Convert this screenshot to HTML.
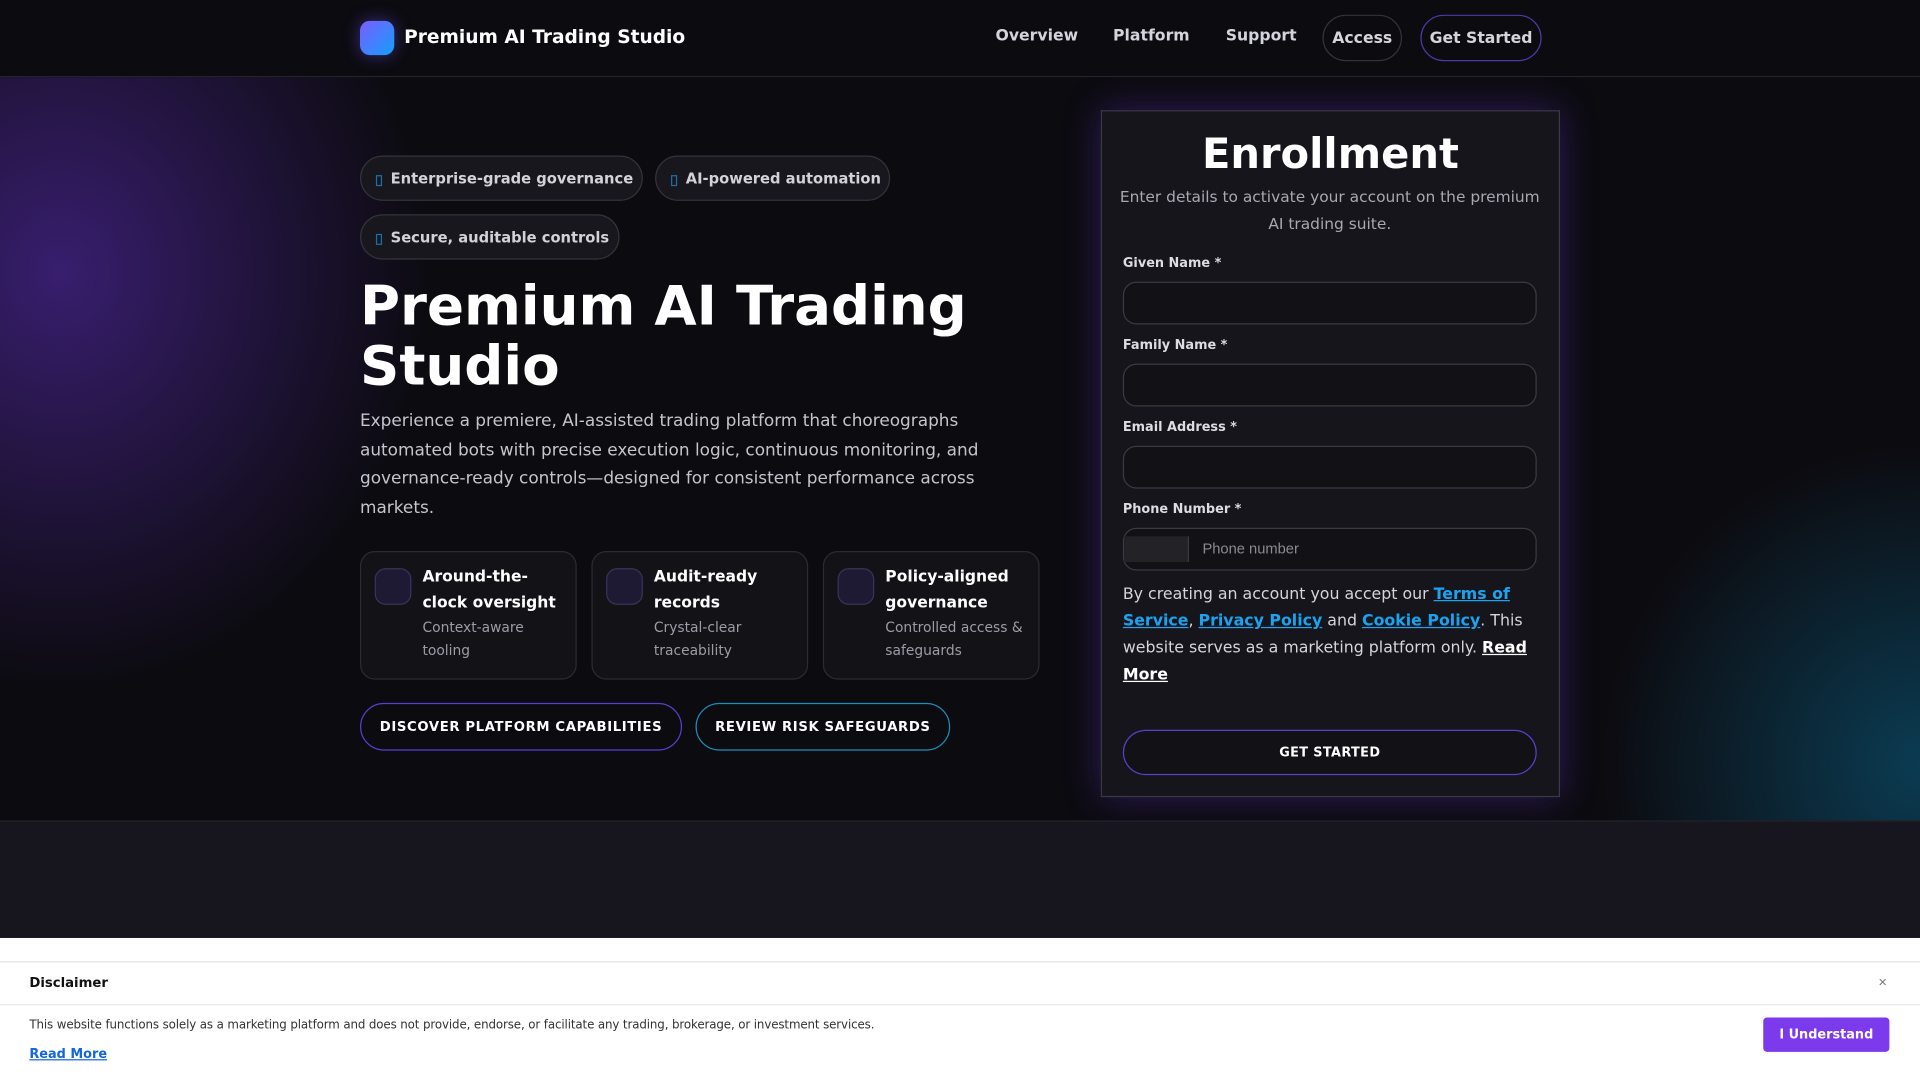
<!DOCTYPE html>
<html><head><meta charset="utf-8"><style>
html,body{margin:0;padding:0;width:1920px;height:1080px;overflow:hidden;background:#0c0b10;}
#w{position:absolute;left:0;top:0;width:1568px;height:882px;transform:scale(1.22449);transform-origin:0 0;font-family:"DejaVu Sans","Liberation Sans",sans-serif;color:#e8e8ee;overflow:hidden;background:#0c0b10}
.a{position:absolute;white-space:nowrap}
header{position:absolute;left:0;top:0;width:1568px;height:62px;background:#0c0b10;border-bottom:1px solid #24232b;z-index:2}
.logo{left:294px;top:17px;width:28px;height:28px;border-radius:8px;background:linear-gradient(135deg,#7b5cff,#139fff);box-shadow:0 0 14px rgba(110,90,255,.45)}
.nav{font-size:12.8px;font-weight:bold;color:#d4d4dc;top:22px}
.pill{border:1px solid #34333d;border-radius:20px;height:38px;top:12px;box-sizing:border-box;font-size:12.8px;font-weight:bold;color:#d4d4dc;display:flex;align-items:center;justify-content:center}
.hero{left:0;top:63px;width:1568px;height:607px;background:
radial-gradient(ellipse 300px 340px at 50px 160px,rgba(75,38,150,.7),transparent 100%),
radial-gradient(ellipse 260px 260px at 1568px 560px,rgba(10,80,110,.7),transparent 100%),#0c0b10}
.chip{height:37px;border:1px solid #34333c;border-radius:19px;background:#18171d;box-sizing:border-box;font-size:12px;font-weight:bold;color:#d2d2da;display:flex;align-items:center;padding-left:24px}
.chip:before{content:"";position:absolute;left:12px;top:15px;width:3px;height:7px;border:1px solid #1f6ea8}
h1{position:absolute;left:294px;top:226px;margin:0;font-size:44.6px;line-height:49px;font-weight:bold;color:#fff;white-space:nowrap}
.p{left:294px;top:333px;width:520px;font-size:13.8px;line-height:23.5px;color:#c4c4cc;white-space:normal}
.card{top:450px;width:177px;height:105px;border:1px solid #2c2b33;border-radius:12px;background:#131217;box-sizing:border-box;white-space:normal}
.card .ic{position:absolute;left:11px;top:13px;width:30px;height:30px;border-radius:9px;background:#1e1a33;border:1px solid #3b3358;box-sizing:border-box}
.card .t{position:absolute;left:50px;top:10px;font-size:12.7px;font-weight:bold;line-height:20.5px;color:#fff;width:122px}
.card .s{position:absolute;left:50px;top:53px;font-size:11.3px;line-height:18.5px;color:#9c9ca6;width:122px}
.btn{top:574px;height:39px;border-radius:20px;box-sizing:border-box;font-size:10.8px;font-weight:bold;letter-spacing:.5px;color:#fff;display:flex;align-items:center;justify-content:center}
.form{left:899px;top:90px;width:375px;height:561px;background:#16151b;border:1px solid #3a3848;box-sizing:border-box;box-shadow:0 0 28px rgba(110,60,230,.35)}
.lbl{left:917px;font-size:10.5px;font-weight:bold;color:#dcdce2}
.in{left:917px;width:338px;height:35px;border:1px solid #3a3a42;border-radius:11px;background:#121116;box-sizing:border-box}
.terms{left:917px;top:475px;width:340px;font-size:12.9px;line-height:22px;color:#d4d4da;white-space:normal}
.terms a{color:#1aa3f0;font-weight:bold;text-decoration:underline}
.terms b{text-decoration:underline;color:#fff}
.sec{left:0;top:670px;width:1568px;height:96px;background:#17161e;border-top:1px solid #24232b}
.disc{left:0;top:766px;width:1568px;height:116px;background:#fff}
</style></head><body><div id="w">
<header>
<div class="a logo"></div>
<div class="a" style="left:330px;top:21px;font-size:15.2px;font-weight:bold;color:#fff">Premium AI Trading Studio</div>
<div class="a nav" style="left:813px">Overview</div>
<div class="a nav" style="left:909px">Platform</div>
<div class="a nav" style="left:1001px">Support</div>
<div class="a pill" style="left:1080px;width:65px">Access</div>
<div class="a pill" style="left:1160px;width:99px;border-color:#4b3aa8">Get Started</div>
</header>
<div class="a hero"></div>
<div class="a chip" style="left:294px;top:127px;width:231px">Enterprise-grade governance</div>
<div class="a chip" style="left:535px;top:127px;width:192px">AI-powered automation</div>
<div class="a chip" style="left:294px;top:175px;width:212px">Secure, auditable controls</div>
<h1>Premium AI Trading<br>Studio</h1>
<div class="a p">Experience a premiere, AI-assisted trading platform that choreographs automated bots with precise execution logic, continuous monitoring, and governance-ready controls—designed for consistent performance across markets.</div>
<div class="a card" style="left:294px"><div class="ic"></div><div class="t">Around-the-clock oversight</div><div class="s">Context-aware tooling</div></div>
<div class="a card" style="left:483px"><div class="ic"></div><div class="t">Audit-ready records</div><div class="s">Crystal-clear traceability</div></div>
<div class="a card" style="left:672px"><div class="ic"></div><div class="t">Policy-aligned governance</div><div class="s">Controlled access &amp; safeguards</div></div>
<div class="a btn" style="left:294px;width:263px;border:1px solid #5a3fd0">DISCOVER PLATFORM CAPABILITIES</div>
<div class="a btn" style="left:568px;width:208px;border:1px solid #1a8fb8">REVIEW RISK SAFEGUARDS</div>
<div class="a form"></div>
<div class="a" style="left:899px;width:375px;top:106px;text-align:center;font-size:34px;font-weight:bold;color:#fff">Enrollment</div>
<div class="a" style="left:908px;width:356px;top:150px;text-align:center;font-size:12.6px;line-height:21.5px;color:#a8a8b2;white-space:normal">Enter details to activate your account on the premium AI trading suite.</div>
<div class="a lbl" style="top:209px">Given Name *</div>
<div class="a in" style="top:230px"></div>
<div class="a lbl" style="top:276px">Family Name *</div>
<div class="a in" style="top:297px"></div>
<div class="a lbl" style="top:343px">Email Address *</div>
<div class="a in" style="top:364px"></div>
<div class="a lbl" style="top:410px">Phone Number *</div>
<div class="a in" style="top:431px"></div>
<div class="a" style="left:918px;top:438px;width:52px;height:21px;background:#232227;border-right:1px solid #3a3a42"></div>
<div class="a" style="left:982px;top:441px;font-size:12px;color:#8a8a92;font-family:'Liberation Sans',sans-serif">Phone number</div>
<div class="a terms">By creating an account you accept our <a>Terms of Service</a>, <a>Privacy Policy</a> and <a>Cookie Policy</a>. This website serves as a marketing platform only. <b>Read More</b></div>
<div class="a btn" style="left:917px;top:596px;width:338px;height:37px;border:1px solid #5a3fd0;font-size:10.5px;letter-spacing:.3px;background:#121116">GET STARTED</div>
<div class="a sec"></div>
<div class="a disc"></div>
<div class="a" style="left:0;top:785px;width:1568px;height:0;border-top:1px solid #e4e4e8"></div>
<div class="a" style="left:0;top:820px;width:1568px;height:0;border-top:1px solid #e8e8ec"></div>
<div class="a" style="left:24px;top:796px;font-size:10.8px;font-weight:bold;color:#111;font-family:'DejaVu Sans',sans-serif">Disclaimer</div>
<div class="a" style="left:1534px;top:795px;font-size:12px;color:#777;font-family:'Liberation Sans',sans-serif">×</div>
<div class="a" style="left:24px;top:831px;font-size:10.4px;color:#333;font-family:'DejaVu Sans',sans-serif;letter-spacing:-.1px;transform:scaleX(.93);transform-origin:0 0">This website functions solely as a marketing platform and does not provide, endorse, or facilitate any trading, brokerage, or investment services.</div>
<div class="a" style="left:24px;top:855px;font-size:10.5px;font-weight:bold;color:#1166dd;text-decoration:underline;font-family:'DejaVu Sans',sans-serif">Read More</div>
<div class="a" style="left:1440px;top:831px;width:103px;height:28px;background:#7c3aed;border-radius:3px;color:#fff;font-size:10.5px;font-weight:bold;display:flex;align-items:center;justify-content:center;font-family:'DejaVu Sans',sans-serif">I Understand</div>
</div></body></html>
